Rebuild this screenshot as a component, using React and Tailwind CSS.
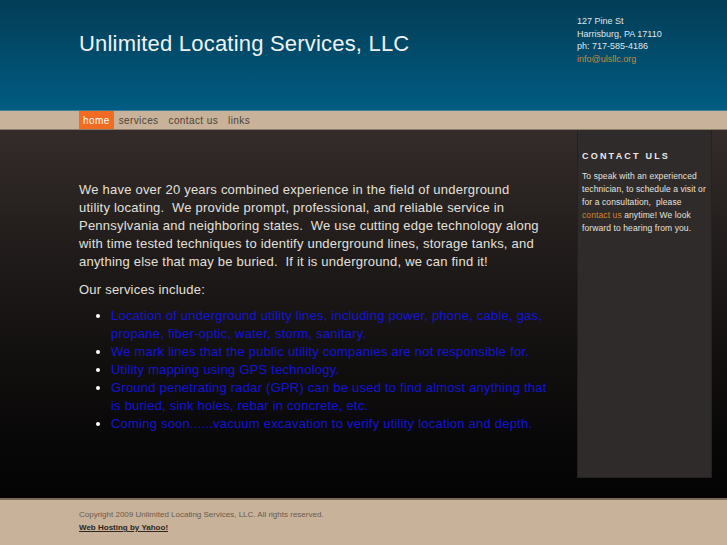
export default function App() {
  const services = [
    "Location of underground utility lines, including power, phone, cable, gas, propane, fiber-optic, water, storm, sanitary.",
    "We mark lines that the public utility companies are not responsible for.",
    "Utility mapping using GPS technology.",
    "Ground penetrating radar (GPR) can be used to find almost anything that is buried, sink holes, rebar in concrete, etc.",
    "Coming soon......vacuum excavation to verify utility location and depth.",
  ]

  return (
    <div className="w-[727px] h-[545px] overflow-hidden flex flex-col font-['Liberation_Sans',Arial,sans-serif]">
      {/* header */}
      <header className="h-[110px] bg-gradient-to-b from-[#033d56] to-[#005c82] flex shrink-0">
        <h1 className="ml-[79px] mt-[30px] text-[22px] leading-[27px] tracking-[0.2px] text-[#eef3f6] w-[498px]">
          Unlimited Locating Services, LLC
        </h1>
        <div className="mt-[15px] text-[9px] leading-[12.7px] text-[#dfe8ec]">
          <p>127 Pine St</p>
          <p>Harrisburg, PA 17110</p>
          <p>ph: 717-585-4186</p>
          <p className="text-[#c48a3a]">info@ulsllc.org</p>
        </div>
      </header>

      {/* nav */}
      <nav className="h-[20px] bg-[#c8b29a] border-t border-[#3f7f96] border-b border-b-[#8c7c6a] flex items-stretch pl-[79px] text-[10px] tracking-[0.4px] text-[#4d4238] shrink-0">
        <a className="bg-[#f26b22] text-white px-[4px] flex items-center">home</a>
        <a className="px-[5px] flex items-center">services</a>
        <a className="px-[5px] flex items-center">contact us</a>
        <a className="px-[5px] flex items-center">links</a>
      </nav>

      {/* main */}
      <main className="h-[368px] bg-gradient-to-b from-[#342c2a] via-[#171413] to-[#040404] flex shrink-0">
        <div className="ml-[79px] w-[462px] pt-[51px] text-[13px] leading-[18px] tracking-[0.22px] text-[#e3e0dc]">
          <p>
            We have over 20 years combined experience in the field of underground utility locating.&nbsp; We provide prompt, professional, and reliable service in Pennsylvania and neighboring states.&nbsp; We use cutting edge technology along with time tested techniques to identify underground lines, storage tanks, and anything else that may be buried.&nbsp; If it is underground, we can find it!
          </p>
          <p className="mt-[10px]">Our services include:</p>
          <ul className="mt-[8px] mr-[-8px] pl-[32px] list-disc marker:text-white text-[#1414d8]">
            {services.map((s) => (
              <li key={s}>{s}</li>
            ))}
          </ul>
        </div>
        <aside className="ml-[36px] w-[135px] h-[348px] bg-[#2f2b2a] border-x border-b border-[#242120] px-[4px] pt-[20px] text-[8.5px] leading-[13px] tracking-[0.1px] text-[#e6e2de]">
          <h2 className="text-[9px] font-bold tracking-[2.2px] text-[#ece9e6] mb-[7px]">CONTACT ULS</h2>
          <p>
            To speak with an experienced technician, to schedule a visit or for a consultation,&nbsp; please <span className="text-[#d4822e]">contact us</span> anytime! We look forward to hearing from you.
          </p>
        </aside>
      </main>

      {/* footer */}
      <footer className="flex-1 bg-[#c8b29a] border-t-2 border-[#7a6a58] pl-[79px] pt-[9px]">
        <p className="text-[8px] leading-[12px] text-[#6a5b4c]">
          Copyright 2009 Unlimited Locating Services, LLC. All rights reserved.
        </p>
        <a className="block mt-[1px] text-[8px] leading-[12px] font-bold text-[#2e2620] underline">Web Hosting by Yahoo!</a>
      </footer>
    </div>
  )
}
